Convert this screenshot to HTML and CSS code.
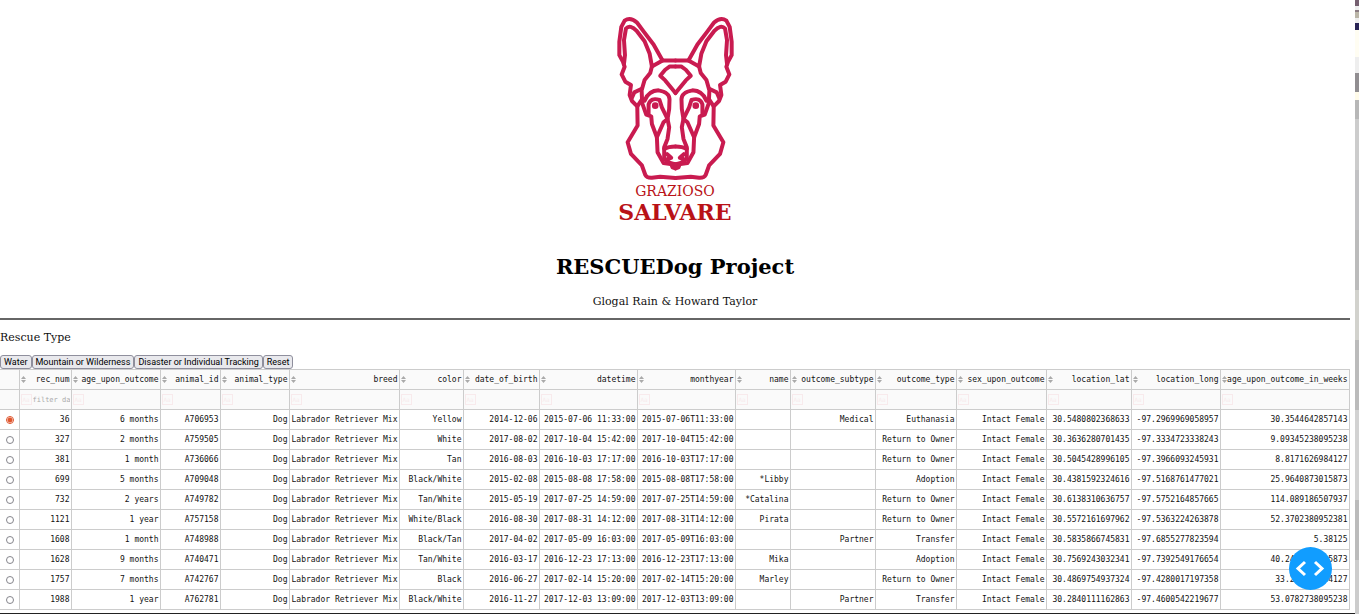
FILE: index.html
```
<!DOCTYPE html>
<html lang="en">
<head>
<meta charset="utf-8">
<title>RESCUEDog Project</title>
<link rel="stylesheet" href="styles.css">
</head>
<body>
<div class="page">
  <main class="content">
    <header class="masthead">
      <div class="logo">
        <svg class="logo-dog" viewBox="45 30 352 504" aria-hidden="true">
          <defs>
            <g id="half">
              <path d="M221 166H182L155 118L126 80L105 52Q85 34 68 46L58 65L52 110V150L63 170L68 185L59 208L70 230L87 240L83 270L90 288L106 304L107 362L77 412L87 447L120 482L130 510Q135 520 150 519L175 516L221 520"/>
              <path d="M182 166L150 184L143 145L128 108L105 78Q84 56 72 70L66 105L69 150L66 176"/>
              <path d="M150 184L145 204L128 225L119 256L121 295L133 329L148 334L150 357L165 397"/>
              <path d="M89 280L97 262L118 252M106 304L119 285"/>
              <path d="M221 184H204L190 194L175 212L190 226L221 264"/>
              <path d="M128 287Q140 257 170 256Q203 262 203 283L202 312L197 342L185 352L165 397L167 442L185 475L206 478L221 487"/>
              <path d="M140 329V298Q147 276 173 285L180 307L197 342L202 367L197 402L187 427V462L206 475L221 478"/>
              <path d="M187 432Q200 425 221 425M196 448L208 459L197 462M208 476L212 488L221 491"/>
              <circle class="pupil" cx="160" cy="302" r="10"/>
            </g>
          </defs>
          <use href="#half"/>
          <use href="#half" transform="translate(442 0) scale(-1 1)"/>
        </svg>
        <span class="logo-top">GRAZIOSO</span>
        <span class="logo-bottom">SALVARE</span>
      </div>
      <h1>RESCUEDog Project</h1>
      <p class="byline">Glogal Rain &amp; Howard Taylor</p>
    </header>
    <hr class="rule">
    <p class="section-label">Rescue Type</p>
    <div class="buttons">
      <button type="button">Water</button>
      <button type="button">Mountain or Wilderness</button>
      <button type="button">Disaster or Individual Tracking</button>
      <button type="button">Reset</button>
    </div>
    <table class="grid">
      <colgroup id="cols"></colgroup>
      <thead id="head"></thead>
      <tbody id="rows"></tbody>
    </table>
    <div class="map-edge"></div>
  </main>
  <div class="backdrop"></div>
</div>
<button type="button" class="debug" aria-label="Developer tools">
  <svg viewBox="0 0 43 43" aria-hidden="true"><path d="M16 15L9 21.500L16 28M26 15L33 21.500L26 28"/></svg>
</button>
<script src="table.js"></script>
</body>
</html>
```
FILE: styles.css
```
body {
  margin: 0;
  background: #fff;
  color: #111;
  font-family: "DejaVu Serif", serif;
  font-size: 11px;
  line-height: 14px;
  overflow: hidden;
}
.page { display: flex; min-height: 100vh; }
.content { flex: 1; min-width: 0; }
.backdrop {
  width: 4px;
  background: linear-gradient(#755f70 0 6px, #eee 6px 10px, #8b7c83 10px 12px, #bbb6a8 12px 18px, #eee 18px 23px, #292455 23px 30px, #fffdf2 30px 57px, #eee 57px 73px, #918e91 73px 92px, #fffbe9 92px 100px, #b7b7b7 100px 119px, #ccc 119px 170px, #c2c2c4 170px 230px, #bbb 230px 290px, #d2d2cd 290px 340px, #bbb 340px 410px, #d2d2d2 410px 500px, #bbb 500px 560px, #ccc 560px);
}
.masthead { margin-right: 5px; text-align: center; }
.logo {
  display: flex;
  flex-direction: column;
  align-items: center;
  padding-top: 15px;
  color: #b91217;
}
.logo-dog {
  display: block;
  width: 117px;
  height: 168px;
  fill: none;
  stroke: #c91b50;
  stroke-width: 12;
  stroke-linejoin: round;
  stroke-linecap: round;
}
.pupil { fill: #c91b50; stroke: none; }
.logo-top { font-size: 14px; line-height: 17px; }
.logo-bottom { font-size: 22px; font-weight: bold; line-height: 24px; }
h1 {
  margin: 28px 0 13px;
  font-size: 21px;
  line-height: 30px;
  color: #000;
}
.byline { margin: 0 0 9px; line-height: 14px; }
.rule { height: 2px; margin: 0 5px 0 0; border: 0; background: #666; }
.section-label { margin: 11px 0 10px; }
.buttons { display: flex; }
.buttons button {
  height: 14px;
  padding: 0 3px;
  border: 1px solid #8f8f9d;
  border-radius: 3px;
  background: #e9e9ed;
  color: #000;
  font: 9px/12px Roboto, sans-serif;
}
.grid {
  width: calc(100% - 6px);
  table-layout: fixed;
  border-collapse: collapse;
  font: 8px/10px "DejaVu Sans Mono", monospace;
}
.grid th, .grid td {
  height: 19px;
  padding: 0 1px;
  border: 1px solid #ccc;
  text-align: right;
  font-weight: normal;
  white-space: nowrap;
  overflow: hidden;
}
.grid tr > :first-child { padding-left: 2px; border-left: 0; text-align: center; }
.grid thead th, .grid thead td { background: #fafafa; }
.head-cell { display: flex; align-items: center; justify-content: space-between; }
.sort {
  flex: none;
  width: 5px;
  padding: 0;
  border: 0;
  background: none;
  line-height: 0;
}
.sort svg { width: 5px; height: 7px; fill: #aaa; }
.filter { display: flex; align-items: center; gap: 1px; }
.case {
  flex: none;
  width: 11px;
  height: 11px;
  padding: 0;
  border: 1px solid #f8eaec;
  background: none;
  color: #f8eaec;
  font: 6px/8px "DejaVu Sans Mono", monospace;
}
.filter input {
  width: 100%;
  min-width: 0;
  padding: 0;
  border: 0;
  background: none;
  font: 7px/10px "DejaVu Sans Mono", monospace;
}
.filter input::placeholder { color: #aaa; opacity: 1; }
.pick {
  appearance: none;
  display: block;
  width: 8px;
  height: 8px;
  margin: 0 auto;
  border: 1px solid #85858c;
  border-radius: 50%;
}
.pick:checked {
  border-color: #e0562e;
  background: radial-gradient(circle, #e0562e 0 2px, #fff 3px);
}
.map-edge { height: 2px; margin-top: 3px; background: #222; }
.debug {
  position: fixed;
  right: 27px;
  bottom: 24px;
  width: 43px;
  height: 43px;
  padding: 0;
  border: 0;
  border-radius: 50%;
  background: #119dff;
}
.debug svg { display: block; fill: none; stroke: #fff; stroke-width: 3; }
```
FILE: table.js
```
const columns = [
  ["rec_num", 52], ["age_upon_outcome", 89], ["animal_id", 60], ["animal_type", 69],
  ["breed", 110], ["color", 64], ["date_of_birth", 76], ["datetime", 98],
  ["monthyear", 98], ["name", 55], ["outcome_subtype", 85], ["outcome_type", 81],
  ["sex_upon_outcome", 90], ["location_lat", 85], ["location_long", 89],
  ["age_upon_outcome_in_weeks", 129]
];
const records = [
  "36|6 months|A706953|Yellow|2014-12-06|2015-07-06 11:33:00||Medical|Euthanasia|30.5480802368633|-97.2969969058957|30.3544642857143",
  "327|2 months|A759505|White|2017-08-02|2017-10-04 15:42:00|||Return to Owner|30.3636280701435|-97.3334723338243|9.09345238095238",
  "381|1 month|A736066|Tan|2016-08-03|2016-10-03 17:17:00|||Return to Owner|30.5045428996105|-97.3966093245931|8.8171626984127",
  "699|5 months|A709048|Black/White|2015-02-08|2015-08-08 17:58:00|*Libby||Adoption|30.4381592324616|-97.5168761477021|25.9640873015873",
  "732|2 years|A749782|Tan/White|2015-05-19|2017-07-25 14:59:00|*Catalina||Return to Owner|30.6138310636757|-97.5752164857665|114.089186507937",
  "1121|1 year|A757158|White/Black|2016-08-30|2017-08-31 14:12:00|Pirata||Return to Owner|30.5572161697962|-97.5363224263878|52.3702380952381",
  "1608|1 month|A748988|Black/Tan|2017-04-02|2017-05-09 16:03:00||Partner|Transfer|30.5835866745831|-97.6855277823594|5.38125",
  "1628|9 months|A740471|Tan/White|2016-03-17|2016-12-23 17:13:00|Mika||Adoption|30.7569243032341|-97.7392549176654|40.2454365015873",
  "1757|7 months|A742767|Black|2016-06-27|2017-02-14 15:20:00|Marley||Return to Owner|30.4869754937324|-97.4280017197358|33.234126984127",
  "1988|1 year|A762781|Black/White|2016-11-27|2017-12-03 13:09:00||Partner|Transfer|30.2840111162863|-97.4600542219677|53.0782738095238"
];
const arrows = '<svg viewBox="0 0 5 7" aria-hidden="true"><path d="M0 3L2.500 0L5 3ZM0 4H5L2.500 7Z"/></svg>';
document.getElementById("cols").innerHTML =
  '<col style="width:19px">' + columns.map(c => `<col style="width:${c[1]}px">`).join("");
document.getElementById("head").innerHTML =
  "<tr><td></td>" + columns.map(c =>
    `<th scope="col"><div class="head-cell"><button type="button" class="sort" aria-label="Sort ${c[0]}">${arrows}</button><span>${c[0]}</span></div></th>`).join("") +
  "</tr><tr><td></td>" + columns.map((c, i) =>
    `<td><div class="filter"><button type="button" class="case" aria-label="Toggle case for ${c[0]}">Aa</button><input type="text" aria-label="Filter ${c[0]}"${i ? "" : ' placeholder="filter data..."'}></div></td>`).join("") + "</tr>";
document.getElementById("rows").innerHTML = records.map((line, i) => {
  const [num, age, id, color, birth, date, name, sub, type, lat, long, weeks] = line.split("|");
  const cells = [num, age, id, "Dog", "Labrador Retriever Mix", color, birth, date,
    date.replace(" ", "T"), name, sub, type, "Intact Female", lat, long, weeks];
  return `<tr><td><input type="radio" class="pick" name="record" aria-label="Select record ${num}"${i ? "" : " checked"}></td>` +
    cells.map(c => `<td>${c}</td>`).join("") + "</tr>";
}).join("");
```
